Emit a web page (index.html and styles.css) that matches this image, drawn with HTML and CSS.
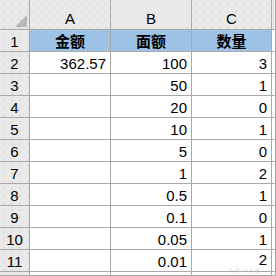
FILE: index.html
```
<!DOCTYPE html>
<html lang="zh">
<head>
<meta charset="utf-8">
<link rel="stylesheet" href="styles.css">
</head>
<body>
<div class="sheet">
  <div class="hd corner"><span class="tri"></span></div>
  <div class="hd col">A</div>
  <div class="hd col">B</div>
  <div class="hd col">C</div>
  <div class="hd col"></div>

  <div class="hd row">1</div>
  <div class="c title">金额</div>
  <div class="c title">面额</div>
  <div class="c title">数量</div>
  <div class="c"></div>

  <div class="hd row">2</div>
  <div class="c num">362.57</div>
  <div class="c num">100</div>
  <div class="c num">3</div>
  <div class="c"></div>

  <div class="hd row">3</div>
  <div class="c"></div>
  <div class="c num">50</div>
  <div class="c num">1</div>
  <div class="c"></div>

  <div class="hd row">4</div>
  <div class="c"></div>
  <div class="c num">20</div>
  <div class="c num">0</div>
  <div class="c"></div>

  <div class="hd row">5</div>
  <div class="c"></div>
  <div class="c num">10</div>
  <div class="c num">1</div>
  <div class="c"></div>

  <div class="hd row">6</div>
  <div class="c"></div>
  <div class="c num">5</div>
  <div class="c num">0</div>
  <div class="c"></div>

  <div class="hd row">7</div>
  <div class="c"></div>
  <div class="c num">1</div>
  <div class="c num">2</div>
  <div class="c"></div>

  <div class="hd row">8</div>
  <div class="c"></div>
  <div class="c num">0.5</div>
  <div class="c num">1</div>
  <div class="c"></div>

  <div class="hd row">9</div>
  <div class="c"></div>
  <div class="c num">0.1</div>
  <div class="c num">0</div>
  <div class="c"></div>

  <div class="hd row">10</div>
  <div class="c"></div>
  <div class="c num">0.05</div>
  <div class="c num">1</div>
  <div class="c"></div>

  <div class="hd row">11</div>
  <div class="c"></div>
  <div class="c num">0.01</div>
  <div class="c num two">2</div>
  <div class="c"></div>

  <div class="hd row"></div>
  <div class="c"></div>
  <div class="c"></div>
  <div class="c"></div>
  <div class="c"></div>
</div>
<div class="mark">头条 @表格</div>
</body>
</html>
```
FILE: styles.css
```
html, body {
  margin: 0;
  padding: 0;
  width: 276px;
  height: 276px;
  overflow: hidden;
  background: #ffffff;
}

.sheet {
  display: grid;
  grid-template-columns: 29px 80px 80px 79px 3px;
  grid-template-rows: 29px repeat(11, 21px) 3px;
  gap: 1px;
  background: #a9a9a9;
  font-family: "Liberation Sans", "Noto Sans CJK SC", sans-serif;
  font-size: 15px;
  color: #000;
  width: 276px;
  height: 276px;
  overflow: hidden;
}

.hd {
  background-color: #e9e9e9;
  background-image: radial-gradient(circle, #d6d6d6 0.6px, transparent 0.9px);
  background-size: 8px 8px;
  display: flex;
  justify-content: center;
  line-height: 1;
  overflow: hidden;
}

.col {
  align-items: flex-end;
  padding-bottom: 3px;
  box-sizing: border-box;
}

.row {
  align-items: center;
  padding-top: 1px;
  box-sizing: border-box;
}

.corner {
  position: relative;
}

.tri {
  position: absolute;
  right: 2px;
  bottom: 2px;
  width: 0;
  height: 0;
  border-left: 12px solid transparent;
  border-bottom: 12px solid #b8b8b8;
}

.c {
  background: #ffffff;
  display: flex;
  align-items: center;
  line-height: 1;
  padding-top: 1px;
  box-sizing: border-box;
  overflow: hidden;
}

.title {
  background: #9dc3e6;
  justify-content: center;
  font-weight: bold;
  font-size: 15px;
  font-family: "Noto Sans CJK SC", sans-serif;
  padding-top: 0;
}

.num {
  justify-content: flex-end;
  padding-right: 4px;
}

.two {
  align-items: flex-start;
  padding-top: 2px;
}

.mark {
  position: absolute;
  left: 229px;
  top: 267px;
  font-family: "Noto Sans CJK SC", sans-serif;
  font-size: 5px;
  line-height: 1;
  color: rgba(175, 175, 175, 0.55);
  letter-spacing: 1px;
}
```
